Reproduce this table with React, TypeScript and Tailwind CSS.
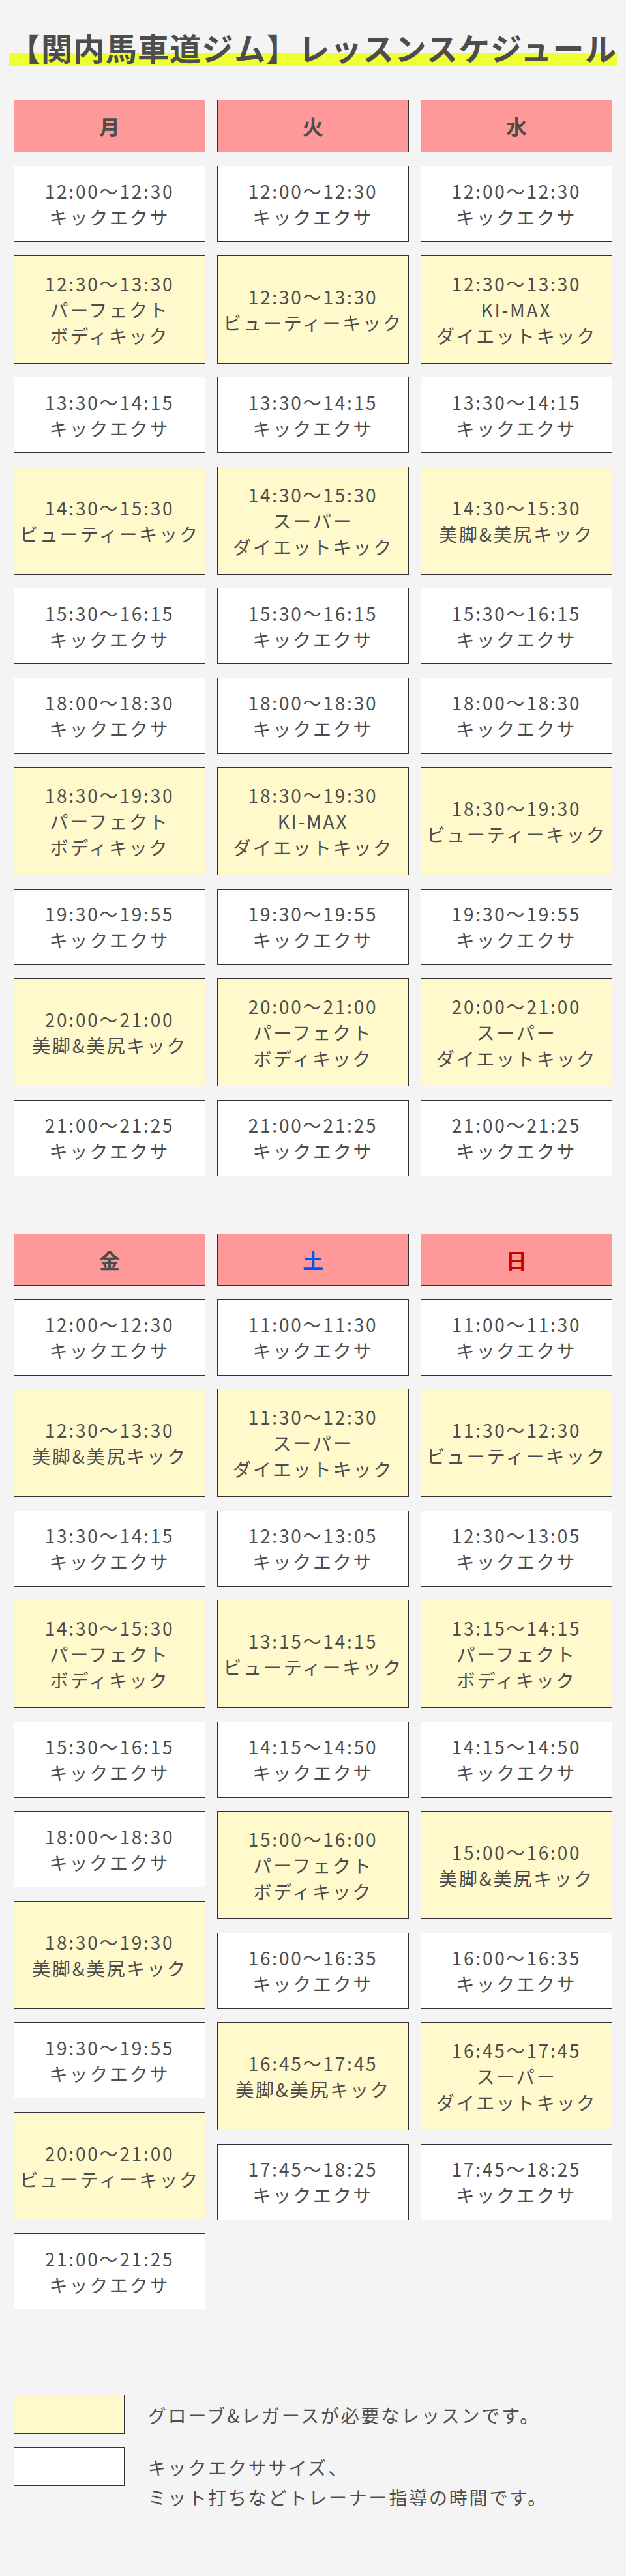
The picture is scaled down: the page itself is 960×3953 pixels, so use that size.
type Lesson = { time: string; name: string[]; glove?: boolean };
type Day = { label: string; color?: string; lessons: Lesson[] };

const KE = ["キックエクサ"];
const PB = ["パーフェクト", "ボディキック"];
const BK = ["ビューティーキック"];
const SD = ["スーパー", "ダイエットキック"];
const KM = ["KI-MAX", "ダイエットキック"];
const BB = ["美脚&美尻キック"];

const WEEKDAYS: Day[] = [
  {
    label: "月",
    lessons: [
      { time: "12:00〜12:30", name: KE },
      { time: "12:30〜13:30", name: PB, glove: true },
      { time: "13:30〜14:15", name: KE },
      { time: "14:30〜15:30", name: BK, glove: true },
      { time: "15:30〜16:15", name: KE },
      { time: "18:00〜18:30", name: KE },
      { time: "18:30〜19:30", name: PB, glove: true },
      { time: "19:30〜19:55", name: KE },
      { time: "20:00〜21:00", name: BB, glove: true },
      { time: "21:00〜21:25", name: KE },
    ],
  },
  {
    label: "火",
    lessons: [
      { time: "12:00〜12:30", name: KE },
      { time: "12:30〜13:30", name: BK, glove: true },
      { time: "13:30〜14:15", name: KE },
      { time: "14:30〜15:30", name: SD, glove: true },
      { time: "15:30〜16:15", name: KE },
      { time: "18:00〜18:30", name: KE },
      { time: "18:30〜19:30", name: KM, glove: true },
      { time: "19:30〜19:55", name: KE },
      { time: "20:00〜21:00", name: PB, glove: true },
      { time: "21:00〜21:25", name: KE },
    ],
  },
  {
    label: "水",
    lessons: [
      { time: "12:00〜12:30", name: KE },
      { time: "12:30〜13:30", name: KM, glove: true },
      { time: "13:30〜14:15", name: KE },
      { time: "14:30〜15:30", name: BB, glove: true },
      { time: "15:30〜16:15", name: KE },
      { time: "18:00〜18:30", name: KE },
      { time: "18:30〜19:30", name: BK, glove: true },
      { time: "19:30〜19:55", name: KE },
      { time: "20:00〜21:00", name: SD, glove: true },
      { time: "21:00〜21:25", name: KE },
    ],
  },
];

const WEEKEND: Day[] = [
  {
    label: "金",
    lessons: [
      { time: "12:00〜12:30", name: KE },
      { time: "12:30〜13:30", name: BB, glove: true },
      { time: "13:30〜14:15", name: KE },
      { time: "14:30〜15:30", name: PB, glove: true },
      { time: "15:30〜16:15", name: KE },
      { time: "18:00〜18:30", name: KE },
      { time: "18:30〜19:30", name: BB, glove: true },
      { time: "19:30〜19:55", name: KE },
      { time: "20:00〜21:00", name: BK, glove: true },
      { time: "21:00〜21:25", name: KE },
    ],
  },
  {
    label: "土",
    color: "text-[#0050ff]",
    lessons: [
      { time: "11:00〜11:30", name: KE },
      { time: "11:30〜12:30", name: SD, glove: true },
      { time: "12:30〜13:05", name: KE },
      { time: "13:15〜14:15", name: BK, glove: true },
      { time: "14:15〜14:50", name: KE },
      { time: "15:00〜16:00", name: PB, glove: true },
      { time: "16:00〜16:35", name: KE },
      { time: "16:45〜17:45", name: BB, glove: true },
      { time: "17:45〜18:25", name: KE },
    ],
  },
  {
    label: "日",
    color: "text-[#c40000]",
    lessons: [
      { time: "11:00〜11:30", name: KE },
      { time: "11:30〜12:30", name: BK, glove: true },
      { time: "12:30〜13:05", name: KE },
      { time: "13:15〜14:15", name: PB, glove: true },
      { time: "14:15〜14:50", name: KE },
      { time: "15:00〜16:00", name: BB, glove: true },
      { time: "16:00〜16:35", name: KE },
      { time: "16:45〜17:45", name: SD, glove: true },
      { time: "17:45〜18:25", name: KE },
    ],
  },
];

function LessonCell({ lesson }: { lesson: Lesson }) {
  return (
    <div
      className={
        lesson.glove
          ? "flex h-[166px] flex-col items-center justify-center border border-[#333] bg-[#fff9cc]"
          : "flex h-[117px] flex-col items-center justify-center border border-[#333] bg-white"
      }
    >
      <p>{lesson.time}</p>
      {lesson.name.map((n) => (
        <p key={n}>{n}</p>
      ))}
    </div>
  );
}

function Week({ days }: { days: Day[] }) {
  return (
    <div className="grid grid-cols-3 items-start gap-x-[17.6px] px-[20.8px]">
      {days.map((day) => (
        <div key={day.label} className="flex flex-col">
          <div
            className={`flex h-[80.5px] items-center justify-center border border-[#333] bg-[#ff9898] text-[32px] font-bold ${day.color ?? "text-[#4d4d4d]"}`}
          >
            {day.label}
          </div>
          <div className="mt-[20.5px] flex flex-col gap-[20.5px] text-center text-[28px] leading-[40px] tracking-[0.1em] text-[#4d4d4d]">
            {day.lessons.map((l) => (
              <LessonCell key={l.time} lesson={l} />
            ))}
          </div>
        </div>
      ))}
    </div>
  );
}

export default function App() {
  return (
    <div className="min-h-[3953px] bg-[#f4f4f4] pb-[100px] font-['Noto_Sans_CJK_JP','Noto_Sans',sans-serif] text-[#4d4d4d]">
      <div className="pt-[42px] text-center">
        <h1 className="inline-block bg-[linear-gradient(transparent_67%,#eeff33_67%)] text-[48px] leading-[60px] font-bold tracking-[1.3px]">
          【関内馬車道ジム】レッスンスケジュール
        </h1>
      </div>

      <div className="mt-[51px]">
        <Week days={WEEKDAYS} />
      </div>

      <div className="mt-[88px]">
        <Week days={WEEKEND} />
      </div>

      <div className="mt-[131px] flex flex-col gap-[20px] px-[20.8px] text-[28px] tracking-[0.1em]">
        <div className="flex items-start">
          <div className="h-[60px] w-[170px] shrink-0 border border-[#333] bg-[#fff9cc]" />
          <p className="ml-[36px] pt-[8px] leading-[46px]">
            グローブ&レガースが必要なレッスンです。
          </p>
        </div>
        <div className="flex items-start">
          <div className="h-[60px] w-[170px] shrink-0 border border-[#333] bg-white" />
          <p className="ml-[36px] pt-[8px] leading-[46px]">
            キックエクササイズ、
            <br />
            ミット打ちなどトレーナー指導の時間です。
          </p>
        </div>
      </div>
    </div>
  );
}
